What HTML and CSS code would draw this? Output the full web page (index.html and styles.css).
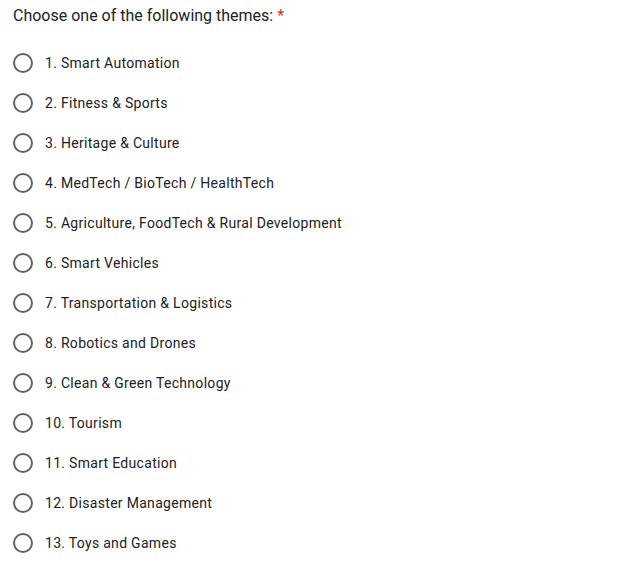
FILE: index.html
```html
<!DOCTYPE html>
<html>
<head>
<meta charset="utf-8">
<link rel="stylesheet" href="styles.css">
</head>
<body>
<div class="question">
  <div class="title">Choose one of the following themes: <span class="req">*</span></div>
  <div class="options">
    <label class="opt"><span class="radio"></span><span class="label">1. Smart Automation</span></label>
    <label class="opt"><span class="radio"></span><span class="label">2. Fitness &amp; Sports</span></label>
    <label class="opt"><span class="radio"></span><span class="label">3. Heritage &amp; Culture</span></label>
    <label class="opt"><span class="radio"></span><span class="label">4. MedTech / BioTech / HealthTech</span></label>
    <label class="opt"><span class="radio"></span><span class="label">5. Agriculture, FoodTech &amp; Rural Development</span></label>
    <label class="opt"><span class="radio"></span><span class="label">6. Smart Vehicles</span></label>
    <label class="opt"><span class="radio"></span><span class="label">7. Transportation &amp; Logistics</span></label>
    <label class="opt"><span class="radio"></span><span class="label">8. Robotics and Drones</span></label>
    <label class="opt"><span class="radio"></span><span class="label">9. Clean &amp; Green Technology</span></label>
    <label class="opt"><span class="radio"></span><span class="label">10. Tourism</span></label>
    <label class="opt"><span class="radio"></span><span class="label">11. Smart Education</span></label>
    <label class="opt"><span class="radio"></span><span class="label">12. Disaster Management</span></label>
    <label class="opt"><span class="radio"></span><span class="label">13. Toys and Games</span></label>
  </div>
</div>
</body>
</html>
```
FILE: styles.css
```css
html, body {
  margin: 0;
  padding: 0;
  background: #fff;
}
body {
  font-family: Roboto, "Noto Sans", Arial, sans-serif;
  color: #202124;
}
.question {
  padding: 4px 0 0 13px;
}
.title {
  font-size: 16px;
  line-height: 24px;
  letter-spacing: 0;
}
.req {
  color: #d93025;
}
.options {
  display: flex;
  flex-direction: column;
  margin-top: 15px;
}
.opt {
  display: flex;
  align-items: center;
  height: 40px;
}
.radio {
  box-sizing: border-box;
  width: 20px;
  height: 20px;
  border: 2px solid #5f6368;
  border-radius: 50%;
  flex: none;
}
.label {
  margin-left: 12px;
  font-size: 14px;
  letter-spacing: 0.3px;
}
```
